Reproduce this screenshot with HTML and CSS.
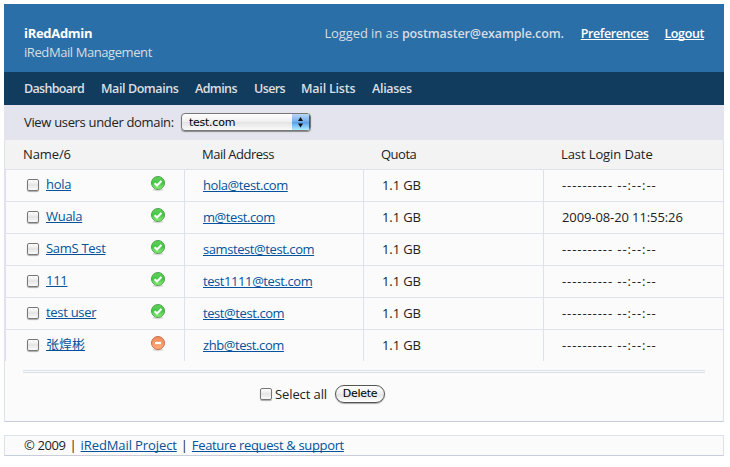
FILE: index.html
```html
<!DOCTYPE html>
<html lang="en">
<head>
<meta charset="utf-8">
<title>iRedAdmin</title>
<link rel="stylesheet" href="styles.css">
</head>
<body>
<svg class="defs" width="0" height="0">
  <defs>
    <linearGradient id="green" x1="0" y1="0" x2="0" y2="1"><stop offset="0" stop-color="#5fd05c"/><stop offset=".5" stop-color="#45c746"/><stop offset="1" stop-color="#8cf07a"/></linearGradient>
    <linearGradient id="orange" x1="0" y1="0" x2="0" y2="1"><stop offset="0" stop-color="#f08a5c"/><stop offset="1" stop-color="#ffab7c"/></linearGradient>
    <symbol id="ok" viewBox="0 0 16 17"><ellipse cx="8" cy="14.8" rx="5.5" ry="1.4" fill="#ddd"/><circle cx="8" cy="8" r="6.5" fill="url(#green)" stroke="#4fa34d"/><path d="M4.6 8.2 7 10.5 11.4 6" fill="none" stroke="#fff" stroke-width="2.1"/></symbol>
    <symbol id="off" viewBox="0 0 16 17"><ellipse cx="8" cy="14.8" rx="5.5" ry="1.4" fill="#ddd"/><circle cx="8" cy="8" r="6.5" fill="url(#orange)" stroke="#c96f4b"/><path d="M5 8h6" fill="none" stroke="#fff" stroke-width="2.2"/></symbol>
  </defs>
</svg>
<div class="panel">
  <header class="header">
    <div><h1 class="brand">iRedAdmin</h1><p class="tagline">iRedMail Management</p></div>
    <div class="account"><span class="logged">Logged in as <b>postmaster@example.com.</b></span><a class="prefs" href="#">Preferences</a><a class="logout" href="#">Logout</a></div>
  </header>
  <nav class="nav"><a class="n1">Dashboard</a><a class="n2">Mail Domains</a><a class="n3">Admins</a><a class="n4">Users</a><a class="n5">Mail Lists</a><a class="n6">Aliases</a></nav>
  <div class="filter"><label class="filter-label">View users under domain:</label><div class="select"><span class="value">test.com</span><span class="arrows"><svg width="18" height="16" viewBox="0 0 18 16"><path d="M6 7 8.5 3 11 7zM6 9.500h5L8.500 13.500z" fill="#111"/></svg></span></div></div>
  <div class="table">
    <div class="row head"><div>Name/6</div><div class="address">Mail Address</div><div class="quota">Quota</div><div>Last Login Date</div></div>
    <div class="row"><div class="name"><i class="check"></i><a href="#">hola</a><svg class="status"><use href="#ok"/></svg></div><div class="mail"><a href="#">hola@test.com</a></div><div>1.1 GB</div><div class="none">---------- --:--:--</div></div>
    <div class="row"><div class="name"><i class="check"></i><a href="#">Wuala</a><svg class="status"><use href="#ok"/></svg></div><div class="mail"><a href="#">m@test.com</a></div><div>1.1 GB</div><div class="date">2009-08-20 11:55:26</div></div>
    <div class="row"><div class="name"><i class="check"></i><a href="#">SamS Test</a><svg class="status"><use href="#ok"/></svg></div><div class="mail"><a href="#">samstest@test.com</a></div><div>1.1 GB</div><div class="none">---------- --:--:--</div></div>
    <div class="row"><div class="name"><i class="check"></i><a href="#">111</a><svg class="status"><use href="#ok"/></svg></div><div class="mail"><a href="#">test1111@test.com</a></div><div>1.1 GB</div><div class="none">---------- --:--:--</div></div>
    <div class="row"><div class="name"><i class="check"></i><a href="#">test user</a><svg class="status"><use href="#ok"/></svg></div><div class="mail"><a href="#">test@test.com</a></div><div>1.1 GB</div><div class="none">---------- --:--:--</div></div>
    <div class="row"><div class="name"><i class="check"></i><a class="cjk" href="#">张煌彬</a><svg class="status"><use href="#off"/></svg></div><div class="mail"><a href="#">zhb@test.com</a></div><div>1.1 GB</div><div class="none">---------- --:--:--</div></div>
  </div>
  <div class="actions"><i class="check"></i><span class="all">Select all</span><button class="delete">Delete</button></div>
</div>
<footer class="footer"><span class="copy">© 2009</span><span>|</span><a class="project" href="#">iRedMail Project</a><span>|</span><a class="support" href="#">Feature request &amp; support</a></footer>
</body>
</html>
```
FILE: styles.css
```css
* { box-sizing: border-box; }
body { margin: 4px 6px 0 4px; background: #fff; color: #222; font: 13px/18px "Trebuchet MS", "Open Sans", "Noto Sans CJK SC", sans-serif; letter-spacing: -0.1px; white-space: nowrap; }
.defs { position: absolute; }
a { color: #04529c; text-underline-offset: 1px; text-decoration-thickness: 1px; text-decoration-skip-ink: none; }
.panel { height: 418px; background: #fbfbfb; border: 1px solid #dde2ec; border-bottom-color: #c9cddb; border-top: 0; }
.header { display: flex; justify-content: space-between; height: 68px; margin: 0 -1px; padding: 20px 20px 0; background: #2a6fa8; color: #d9dde2; }
.brand { margin: 0; font-size: 13px; line-height: 19px; color: #fff; letter-spacing: -0.3px; }
.tagline { margin: 0; line-height: 19px; letter-spacing: -0.42px; }
.account { display: flex; line-height: 19px; }
.account b { font-weight: 600; font-size: 12.5px; letter-spacing: -0.13px; }
.account a { color: #fff; font-weight: 600; font-size: 12.5px; letter-spacing: -0.39px; }
.prefs { margin: 0 16px 0 17px; }
.nav { display: flex; height: 33px; margin: 0 -1px; padding: 0 20px; background: #123c5e; color: #dddfe1; font-weight: 600; font-size: 12.5px; line-height: 33px; }
.nav a { color: inherit; }
.n1 { width: 77px; letter-spacing: -0.7px; }
.n2 { width: 94px; letter-spacing: -0.42px; }
.n3 { width: 59px; letter-spacing: -0.6px; }
.n4 { width: 47px; letter-spacing: -0.6px; }
.n5 { width: 71px; letter-spacing: -0.2px; }
.n6 { letter-spacing: -0.3px; }
.filter { display: flex; align-items: center; height: 35px; margin: 0 -1px; padding: 0 20px 2px; background: #e3e4ed; }
.filter-label { width: 157px; letter-spacing: -0.33px; }
.select { display: flex; justify-content: space-between; width: 130px; height: 18px; border: 1px solid #777; border-radius: 4px; background: linear-gradient(#fff, #eee 50%, #e3e3e3 51%, #fafafa); box-shadow: 0 1px 1px #888; overflow: hidden; }
.value { padding-left: 7px; font: 11px/17px "Lucida Grande", "DejaVu Sans", sans-serif; letter-spacing: -0.25px; color: #000; }
.arrows { width: 18px; background: linear-gradient(#b9d7f6, #70adea 50%, #559de8 51%, #b0edff); box-shadow: inset -1px 0 #344fa3; }
.arrows svg { display: block; }
.row { display: grid; grid-template-columns: 179px 179px 180px 180px; height: 32px; }
.row > div { border-left: 1px solid #dde2ec; border-top: 1px solid #dde2ec; padding-left: 18px; line-height: 31px; }
.row.head { height: 29px; background: #f3f3f3; }
.row.head > div { border: 0; line-height: 28px; }
.head > .address { letter-spacing: -0.5px; }
.head > .quota { letter-spacing: -0.5px; }
.row > .name { display: flex; padding: 0 18px 0 21px; line-height: 29px; letter-spacing: -0.3px; }
.row > .mail { letter-spacing: -0.42px; }
.row > .none { letter-spacing: 0.92px; }
.name .cjk { letter-spacing: 0; }
.check { flex: none; width: 12px; height: 12px; border: 1px solid #777; border-radius: 2px; background: linear-gradient(#fff, #e5e5e5 50%, #fafafa); box-shadow: 0 1px 1px #aaa; }
.name .check { margin: 9px 7px 0 0; }
.status { width: 16px; height: 17px; margin: 5px 0 0 auto; }
.actions { display: flex; align-items: center; height: 51px; margin: 9px 18px 0; padding: 0 0 7px 237px; border-top: 3px double #d8e0e8; }
.all { width: 60px; margin-left: 3px; }
.delete { width: 50px; height: 18px; padding: 0; border: 1px solid #555; border-radius: 9px; background: linear-gradient(#fff, #eee 50%, #e4e4e4 51%, #fff); box-shadow: 0 1px 1px #aaa; font: 11px/15px "Lucida Grande", "DejaVu Sans", sans-serif; letter-spacing: -0.3px; color: #000; }
.footer { display: flex; gap: 4px; height: 21px; margin-top: 13px; padding-left: 19px; border: 1px solid #dde2ec; border-bottom-color: #c9cddb; background: #fbfbfb; line-height: 19px; }
.copy { letter-spacing: -0.4px; }
.support { letter-spacing: -0.34px; }
```
